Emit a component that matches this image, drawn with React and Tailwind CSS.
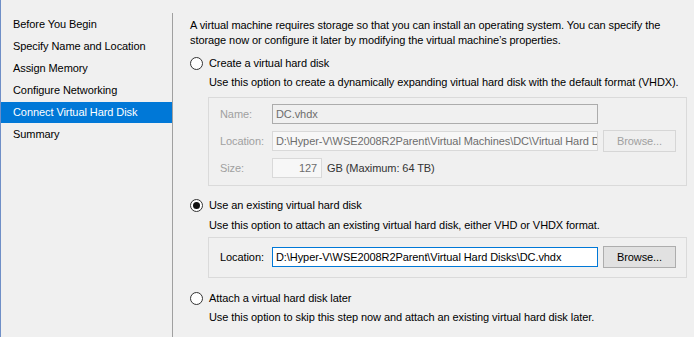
import React from 'react';

const STEPS = [
  'Before You Begin',
  'Specify Name and Location',
  'Assign Memory',
  'Configure Networking',
  'Connect Virtual Hard Disk',
  'Summary',
];

function Radio({ checked, label }) {
  return (
    <div className="flex items-center h-[16px]">
      <span className="w-[13px] h-[13px] rounded-full border border-[#333] bg-white flex items-center justify-center shrink-0">
        {checked && <span className="w-[7px] h-[7px] rounded-full bg-[#111]" />}
      </span>
      <span className="ml-[6px] text-black">{label}</span>
    </div>
  );
}

function Field({ label, disabled, children }) {
  return (
    <div className="flex items-center h-[20px]">
      <span className={`w-[52px] shrink-0 ${disabled ? 'text-[#a0a0a0]' : 'text-black'}`}>{label}</span>
      {children}
    </div>
  );
}

export default function App() {
  return (
    <div
      className="w-[694px] h-[337px] bg-[#f0f0f0] flex overflow-hidden text-[11px] tracking-[-0.08px] leading-[15px] text-black whitespace-nowrap"
      style={{ fontFamily: '"Segoe UI", "Liberation Sans", Arial, sans-serif' }}
    >
      {/* step list */}
      <div className="w-[172px] shrink-0 border-l border-[#6f8fc7] pt-[14px]">
        {STEPS.map((s, i) => (
          <div
            key={s}
            className={`h-[21px] mb-px flex items-center pl-[12px] ${i === 4 ? 'bg-[#0078d7] text-white' : ''}`}
          >
            {s}
          </div>
        ))}
      </div>
      <div className="w-px bg-[#a0a0a0] mt-[13px] shrink-0" />

      {/* page */}
      <div className="flex-1 pl-[17px] pt-[18px]">
        <p>
          A virtual machine requires storage so that you can install an operating system. You can specify the
          <br />
          storage now or configure it later by modifying the virtual machine’s properties.
        </p>

        <div className="mt-[7px]">
          <Radio label="Create a virtual hard disk" />
        </div>
        <p className="mt-[4px] pl-[19px]">
          Use this option to create a dynamically expanding virtual hard disk with the default format (VHDX).
        </p>
        <div className="mt-[7px] ml-[18px] w-[479px] border border-[#dadada] pt-[6px] pb-[7px] pl-[11px] flex flex-col gap-[7px]">
          <Field label="Name:" disabled>
            <div className="w-[326px] h-[20px] border border-[#acacac] px-[3px] flex items-center text-[#6d6d6d]">DC.vhdx</div>
          </Field>
          <Field label="Location:" disabled>
            <div className="w-[326px] h-[20px] border border-[#d9d9d9] bg-[#f7f7f7] px-[3px] flex items-center text-[#6d6d6d] overflow-hidden">
              D:\Hyper-V\WSE2008R2Parent\Virtual Machines\DC\Virtual Hard Disks\DC.vhdx
            </div>
            <button className="ml-[5px] w-[73px] h-[22px] border border-[#d6d6d6] bg-[#efefef] text-[#a0a0a0] shrink-0">
              Browse...
            </button>
          </Field>
          <Field label="Size:" disabled>
            <div className="w-[50px] h-[20px] border border-[#d9d9d9] bg-[#f7f7f7] px-[4px] flex items-center justify-end text-[#6d6d6d]">127</div>
            <span className="ml-[5px] text-[#333]">GB (Maximum: 64 TB)</span>
          </Field>
        </div>

        <div className="mt-[11px]">
          <Radio checked label="Use an existing virtual hard disk" />
        </div>
        <p className="mt-[5px] pl-[19px]">
          Use this option to attach an existing virtual hard disk, either VHD or VHDX format.
        </p>
        <div className="mt-[4px] ml-[18px] w-[479px] border border-[#dadada] pt-[9px] pb-[10px] pl-[11px]">
          <Field label="Location:">
            <div className="w-[326px] h-[20px] border border-[#0078d7] bg-white px-[3px] flex items-center overflow-hidden">
              D:\Hyper-V\WSE2008R2Parent\Virtual Hard Disks\DC.vhdx
            </div>
            <button className="ml-[5px] w-[73px] h-[22px] border border-[#adadad] bg-[#e1e1e1] text-black shrink-0">
              Browse...
            </button>
          </Field>
        </div>

        <div className="mt-[12px]">
          <Radio label="Attach a virtual hard disk later" />
        </div>
        <p className="mt-[4px] pl-[19px]">
          Use this option to skip this step now and attach an existing virtual hard disk later.
        </p>
      </div>
    </div>
  );
}
